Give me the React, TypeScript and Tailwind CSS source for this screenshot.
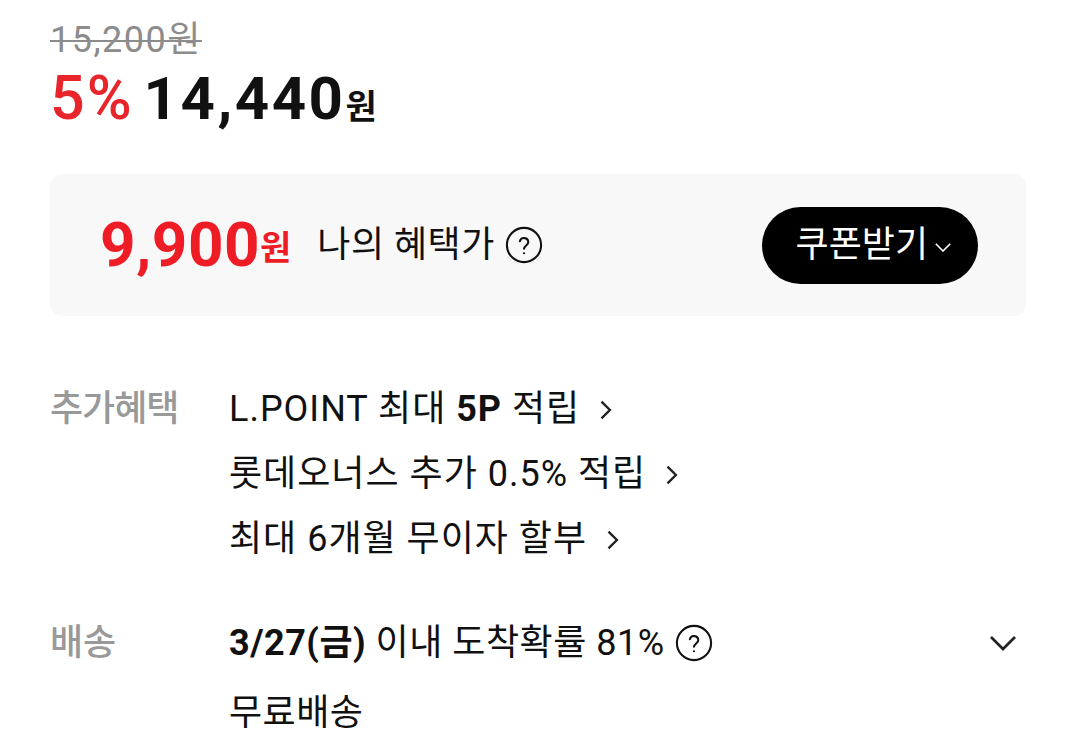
import React from "react";

const font = { fontFamily: 'Roboto, "Noto Sans CJK KR", sans-serif' };

const QuestionIcon = ({ size = 38 }: { size?: number }) => (
  <svg width={size} height={size} viewBox="0 0 24 24" fill="none" stroke="#111" strokeWidth="1.3">
    <circle cx="12" cy="12" r="10.8" />
    <path d="M9.4 9.6a2.7 2.7 0 0 1 5.3.7c0 1.8-2.7 2.2-2.7 4.1" strokeLinecap="round" />
    <circle cx="12" cy="17.2" r="0.7" fill="#111" stroke="none" />
  </svg>
);

const ChevronRight = () => (
  <svg width="18" height="28" viewBox="0 0 12 20" fill="none" stroke="#222" strokeWidth="1.7" className="ml-[16px]">
    <path d="M3.5 4l6 6-6 6" />
  </svg>
);

const ChevronDown = ({ className = "", color = "#222", w = 30 }: { className?: string; color?: string; w?: number }) => (
  <svg width={w} height={w * 0.6} viewBox="0 0 20 12" fill="none" stroke={color} strokeWidth="1.8" className={className}>
    <path d="M2 2l8 8 8-8" />
  </svg>
);

export default function App() {
  return (
    <div className="w-[1080px] h-[749px] overflow-hidden bg-white text-[#111]" style={font}>
      <div className="pl-[50px] pr-[52px]">
        {/* price */}
        <div className="h-[58px] flex items-end">
          <span className="text-[36px] leading-none text-[#8c8c8c] line-through decoration-[2px] tracking-[1.5px]">
            15,200원
          </span>
        </div>
        <div className="flex items-baseline h-[80px] pt-[10px]">
          <span className="text-[61px] font-medium text-[#e8252b] leading-none tracking-[2px]">5%</span>
          <span className="ml-[10px] text-[60px] font-bold leading-none tracking-[2.5px]">14,440</span>
          <span className="text-[34px] font-bold leading-none">원</span>
        </div>

        {/* benefit box */}
        <div className="mt-[36px] w-[976px] h-[142px] rounded-[12px] bg-[#f8f8f8] flex items-center justify-between pl-[50px] pr-[48px]">
          <div className="flex items-center">
            <span className="text-[62px] font-bold text-[#ee1c25] leading-none tracking-[0.5px]">9,900</span>
            <span className="text-[34px] font-bold text-[#ee1c25] leading-none mt-[6px]">원</span>
            <span className="ml-[26px] text-[36px] leading-none tracking-[0.5px]">나의 혜택가</span>
            <span className="ml-[10px]">
              <QuestionIcon />
            </span>
          </div>
          <div className="h-[77px] pl-[34px] pr-[26px] rounded-full bg-black text-white flex items-center">
            <span className="text-[36px] leading-none">쿠폰받기</span>
            <ChevronDown color="#fff" w={18} className="ml-[6px] mt-1" />
          </div>
        </div>

        {/* benefits */}
        <div className="mt-[61px] flex">
          <div className="w-[179px] text-[36px] leading-[65px] text-[#999] font-medium tracking-[-1px]">추가혜택</div>
          <div className="flex flex-col text-[36px] leading-[65px] tracking-[1px]">
            <div className="flex items-center">
              <span>L.POINT 최대 <b className="font-bold">5P</b> 적립</span>
              <ChevronRight />
            </div>
            <div className="flex items-center">
              <span>롯데오너스 추가 0.5% 적립</span>
              <ChevronRight />
            </div>
            <div className="flex items-center">
              <span>최대 6개월 무이자 할부</span>
              <ChevronRight />
            </div>
          </div>
        </div>

        {/* delivery */}
        <div className="mt-[36px] flex">
          <div className="w-[179px] text-[36px] leading-[70px] text-[#999] font-medium">배송</div>
          <div className="flex-1 flex flex-col text-[36px] leading-[70px] tracking-[0.5px]">
            <div className="flex items-center">
              <span><b className="font-bold">3/27(금)</b> 이내 도착확률 81%</span>
              <span className="ml-[10px]">
                <QuestionIcon />
              </span>
              <ChevronDown className="ml-auto mr-[10px]" w={30} />
            </div>
            <div>무료배송</div>
          </div>
        </div>
      </div>
    </div>
  );
}
